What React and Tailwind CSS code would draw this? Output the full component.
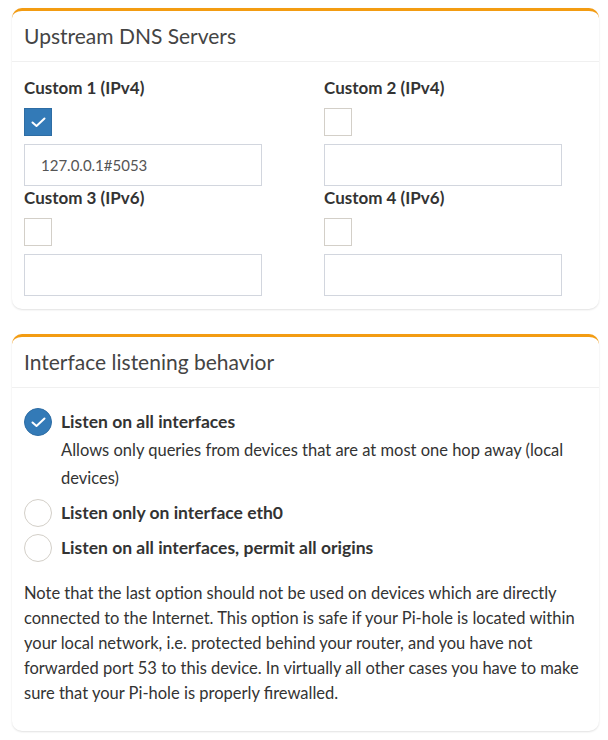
import React from 'react'

const font = { fontFamily: 'Lato, "Noto Sans", sans-serif' }

const CheckMark = () => (
  <svg width="15" height="11" viewBox="0 0 15 11" fill="none">
    <path d="M1.5 5.5 L5.5 9 L13.5 1.5" stroke="white" strokeWidth="2" strokeLinecap="round" strokeLinejoin="round" />
  </svg>
)

const CheckBox = ({ checked }) => (
  <div
    className={`w-[28px] h-[28px] border flex items-center justify-center ${
      checked ? 'bg-[#337ab7] border-[#2e6da4]' : 'bg-white border-[#d3cfc8]'
    }`}
  >
    {checked && <CheckMark />}
  </div>
)

const Radio = ({ checked }) => (
  <div
    className={`w-[28px] h-[28px] shrink-0 rounded-full border flex items-center justify-center ${
      checked ? 'bg-[#337ab7] border-[#2e6da4]' : 'bg-white border-[#d3cfc8]'
    }`}
  >
    {checked && <CheckMark />}
  </div>
)

const ServerField = ({ label, checked, value }) => (
  <div className="flex flex-col">
    <div className="text-[17px] leading-[24px] font-bold text-[#333] mb-[8px]">{label}</div>
    <div className="mb-[8px]">
      <CheckBox checked={checked} />
    </div>
    <div className="w-[238px] h-[42px] border border-[#d2d6de] flex items-center pl-[16px] text-[15px] text-[#555]">
      {value}
    </div>
  </div>
)

const Card = ({ title, children }) => (
  <div className="bg-white rounded-[10px] border-t-[3px] border-[#f39c12] shadow-[0_1px_2px_rgba(0,0,0,0.12)]">
    <div className="px-[12px] h-[51px] flex items-center border-b border-[#f0f0f0]">
      <h3 className="text-[21px] text-[#444] font-normal">{title}</h3>
    </div>
    {children}
  </div>
)

export default function App() {
  return (
    <div className="bg-white min-h-[740px] pt-[8px] pl-[12px] pr-[9px]" style={font}>
      <Card title="Upstream DNS Servers">
        <div className="grid grid-cols-[300px_1fr] px-[12px] pt-[14px] pb-[13px]">
          <ServerField label="Custom 1 (IPv4)" checked value="127.0.0.1#5053" />
          <ServerField label="Custom 2 (IPv4)" />
          <ServerField label="Custom 3 (IPv6)" />
          <ServerField label="Custom 4 (IPv6)" />
        </div>
      </Card>

      <div className="h-[25px]" />

      <Card title="Interface listening behavior">
        <div className="px-[12px] pt-[20px] pb-[25px] text-[16.5px] text-[#333]">
          <div className="flex gap-[9px]">
            <Radio checked />
            <div className="flex flex-col">
              <div className="font-bold text-[17.5px] leading-[28px]">Listen on all interfaces</div>
              <div className="leading-[28px]">
                Allows only queries from devices that are at most one hop away (local devices)
              </div>
            </div>
          </div>
          <div className="flex gap-[9px] items-center mt-[7px]">
            <Radio />
            <div className="font-bold text-[17.5px]">Listen only on interface eth0</div>
          </div>
          <div className="flex gap-[9px] items-center mt-[7px]">
            <Radio />
            <div className="font-bold text-[17.5px]">Listen on all interfaces, permit all origins</div>
          </div>
          <p className="mt-[19px] leading-[25px]">
            Note that the last option should not be used on devices which are directly connected to the
            Internet. This option is safe if your Pi-hole is located within your local network, i.e.
            protected behind your router, and you have not forwarded port 53 to this device. In virtually
            all other cases you have to make sure that your Pi-hole is properly firewalled.
          </p>
        </div>
      </Card>
    </div>
  )
}
